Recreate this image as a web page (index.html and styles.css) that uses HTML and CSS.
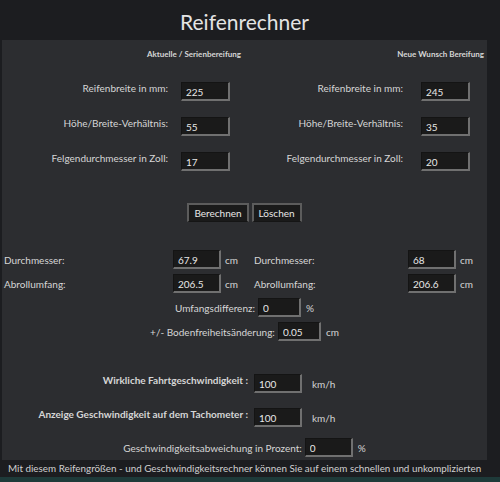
FILE: index.html
```html
<!DOCTYPE html>
<html lang="de">

<head>
    <meta charset="UTF-8">
    <meta name="viewport" content="width=device-width, initial-scale=1.0">
    <title>Reifenrechner</title>
    <link rel="stylesheet" href="styles.css">
</head>

<body>

    <h1 class="title">Reifenrechner</h1>

    <div class="panel">

        <!-- Reifen Eingabe -->
        <div class="tires">
            <div class="side left">
                <div class="side-head">Aktuelle / Serienbereifung</div>
                <label>Reifenbreite in mm:</label>
                <input class="field" type="text" value="225">
                <label>Höhe/Breite-Verhältnis:</label>
                <input class="field" type="text" value="55">
                <label>Felgendurchmesser in Zoll:</label>
                <input class="field" type="text" value="17">
            </div>
            <div class="side right">
                <div class="side-head">Neue Wunsch Bereifung</div>
                <label>Reifenbreite in mm:</label>
                <input class="field" type="text" value="245">
                <label>Höhe/Breite-Verhältnis:</label>
                <input class="field" type="text" value="35">
                <label>Felgendurchmesser in Zoll:</label>
                <input class="field" type="text" value="20">
            </div>
        </div>

        <div class="actions">
            <button class="btn">Berechnen</button>
            <button class="btn">Löschen</button>
        </div>

        <!-- Ergebnisse -->
        <div class="results">
            <span class="res-label">Durchmesser:</span>
            <input class="field small" type="text" value="67.9">
            <span class="unit">cm</span>
            <span class="res-label">Durchmesser:</span>
            <input class="field small" type="text" value="68">
            <span class="unit">cm</span>

            <span class="res-label">Abrollumfang:</span>
            <input class="field small" type="text" value="206.5">
            <span class="unit">cm</span>
            <span class="res-label">Abrollumfang:</span>
            <input class="field small" type="text" value="206.6">
            <span class="unit">cm</span>
        </div>

        <div class="line">
            <span>Umfangsdifferenz:</span>
            <input class="field narrow" type="text" value="0">
            <span class="unit">%</span>
        </div>
        <div class="line">
            <span>+/- Bodenfreiheitsänderung:</span>
            <input class="field narrow" type="text" value="0.05">
            <span class="unit">cm</span>
        </div>

        <!-- Tacho -->
        <div class="speed">
            <label class="speed-label">Wirkliche Fahrtgeschwindigkeit :</label>
            <input class="field small" type="text" value="100">
            <span class="unit">km/h</span>
            <label class="speed-label">Anzeige Geschwindigkeit auf dem Tachometer :</label>
            <input class="field small" type="text" value="100">
            <span class="unit">km/h</span>
        </div>

        <div class="line deviation">
            <span>Geschwindigkeitsabweichung in Prozent:</span>
            <input class="field small" type="text" value="0">
            <span class="unit">%</span>
        </div>

    </div>

    <p class="footer-text">Mit diesem Reifengrößen - und Geschwindigkeitsrechner können Sie auf einem schnellen und unkomplizierten</p>
    <div class="footer-bar"></div>

</body>

</html>
```

FILE: styles.css
```css
* {
    margin: 0;
    padding: 0;
    box-sizing: border-box;
}

body {
    font-family: Lato, "Open Sans", sans-serif;
    font-size: 10px;
    background-color: #1c1d20;
    color: #d6d6d6;
    width: 500px;
    height: 482px;
    overflow: hidden;
}

.title {
    height: 40px;
    line-height: 44px;
    font-size: 21px;
    font-weight: normal;
    color: #e4e4e4;
    text-align: center;
    margin-right: 11px;
}

/* Panel */
.panel {
    width: 485px;
    height: 420px;
    margin-left: 2px;
    background-color: #2c2d30;
    padding-top: 9px;
}

.field {
    width: 49px;
    height: 19px;
    background-color: #1a1a1a;
    color: #e8e8e8;
    font-family: inherit;
    font-size: 10px;
    padding: 2px 0 0 4px;
    border: none;
    border-top: 1px solid #141414;
    border-left: 1px solid #141414;
    border-right: 2px solid #707070;
    border-bottom: 2px solid #707070;
    outline: none;
}

.field.small {
    width: 48px;
}

.field.narrow {
    width: 43px;
}

.unit {
    padding-left: 4px;
}

/* Tires */
.tires {
    display: flex;
}

.side {
    display: grid;
    grid-template-columns: 1fr 49px;
    row-gap: 16px;
    align-items: start;
}

.side.left {
    width: 228px;
    column-gap: 13px;
}

.side.right {
    width: 240px;
    column-gap: 18px;
}

.side label {
    text-align: right;
    white-space: nowrap;
}

.side-head {
    grid-column: 1 / 3;
    height: 10px;
    line-height: 10px;
    font-size: 8px;
    font-weight: bold;
    white-space: nowrap;
    margin-bottom: 7px;
}

.side.left .side-head {
    padding-left: 145px;
    margin-right: -40px;
}

.side.right .side-head {
    text-align: right;
    margin-right: -14px;
}

.actions {
    display: flex;
    justify-content: center;
    gap: 3px;
    margin-top: 32px;
}

.btn {
    height: 19px;
    padding: 0 5px;
    background-color: #1a1a1a;
    color: #e8e8e8;
    font-family: inherit;
    font-size: 10px;
    border: 2px solid #5c5c5c;
    border-bottom: 1px solid #151515;
}

/* Results */
.results {
    display: grid;
    grid-template-columns: 169px 48px 33px 154px 48px auto;
    grid-auto-rows: 19px;
    row-gap: 5px;
    align-items: center;
    margin-top: 28px;
    padding-left: 2px;
}

.line {
    display: flex;
    justify-content: center;
    align-items: center;
    height: 19px;
    gap: 3px;
    margin-top: 5px;
}

.line .unit {
    padding-left: 2px;
}

/* Speed */
.speed {
    display: grid;
    grid-template-columns: 246px 48px auto;
    grid-auto-rows: 19px;
    column-gap: 6px;
    row-gap: 15px;
    align-items: start;
    margin-top: 33px;
}

.speed-label {
    font-weight: bold;
    text-align: right;
    white-space: nowrap;
}

.speed .unit {
    padding-top: 4px;
}

.line.deviation {
    margin-top: 11px;
}

.footer-text {
    height: 17px;
    line-height: 17px;
    padding-left: 8px;
    font-size: 9.85px;
    color: #d0d0d0;
    white-space: nowrap;
    overflow: hidden;
}

.footer-bar {
    height: 5px;
    background-color: #1e3a39;
}
```
